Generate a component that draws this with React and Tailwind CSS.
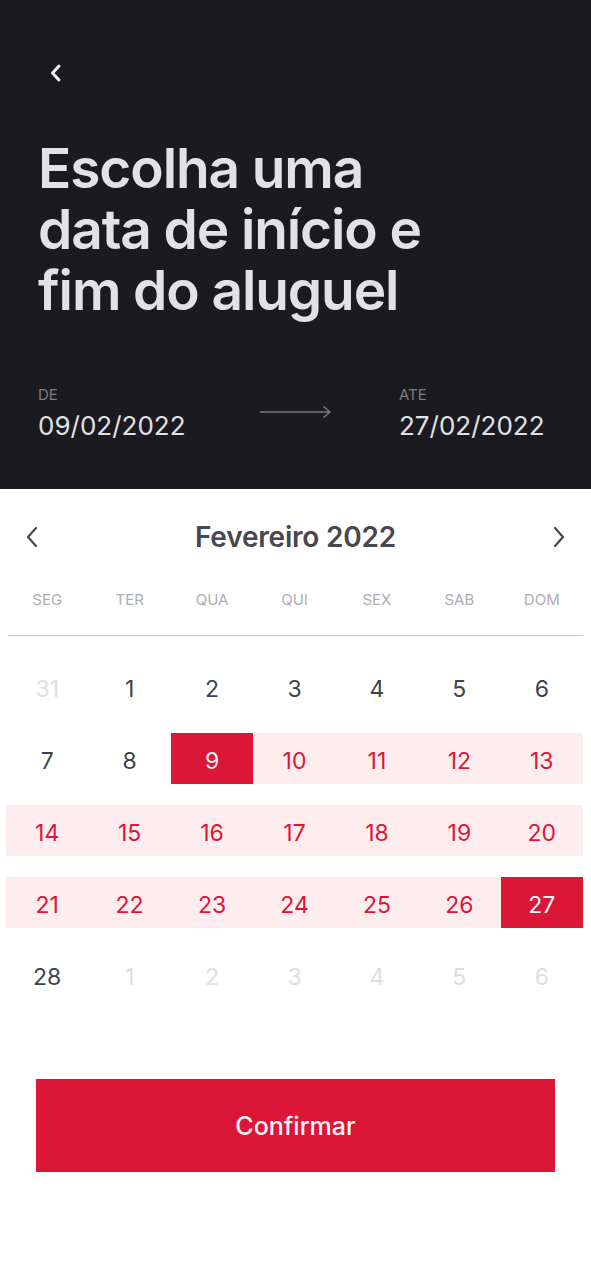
const weekDays = ["SEG", "TER", "QUA", "QUI", "SEX", "SAB", "DOM"];

// kind: off (other month), day (normal), start/end (selected), mid (in range)
const days = [
  { n: 31, kind: "off" }, { n: 1, kind: "day" }, { n: 2, kind: "day" }, { n: 3, kind: "day" }, { n: 4, kind: "day" }, { n: 5, kind: "day" }, { n: 6, kind: "day" },
  { n: 7, kind: "day" }, { n: 8, kind: "day" }, { n: 9, kind: "start" }, { n: 10, kind: "mid" }, { n: 11, kind: "mid" }, { n: 12, kind: "mid" }, { n: 13, kind: "mid" },
  { n: 14, kind: "mid" }, { n: 15, kind: "mid" }, { n: 16, kind: "mid" }, { n: 17, kind: "mid" }, { n: 18, kind: "mid" }, { n: 19, kind: "mid" }, { n: 20, kind: "mid" },
  { n: 21, kind: "mid" }, { n: 22, kind: "mid" }, { n: 23, kind: "mid" }, { n: 24, kind: "mid" }, { n: 25, kind: "mid" }, { n: 26, kind: "mid" }, { n: 27, kind: "end" },
  { n: 28, kind: "day" }, { n: 1, kind: "off" }, { n: 2, kind: "off" }, { n: 3, kind: "off" }, { n: 4, kind: "off" }, { n: 5, kind: "off" }, { n: 6, kind: "off" },
];

const cellStyles = {
  off: "text-[#dedee3]",
  day: "text-[#3d434a]",
  start: "bg-[#dc1637] text-[#f4f5f6]",
  end: "bg-[#dc1637] text-[#f4f5f6]",
  mid: "bg-[#fdedef] text-[#dc1637]",
};

function Chevron({ dir, className }) {
  return (
    <svg width="14" height="22" viewBox="0 0 14 22" fill="none" className={className}>
      {dir === "left" ? (
        <path d="M11 2L3 11l8 9" stroke="currentColor" strokeWidth="2.2" strokeLinecap="round" strokeLinejoin="round" />
      ) : (
        <path d="M3 2l8 9-8 9" stroke="currentColor" strokeWidth="2.2" strokeLinecap="round" strokeLinejoin="round" />
      )}
    </svg>
  );
}

export default function App() {
  return (
    <div className="w-[591px] h-[1280px] bg-white overflow-hidden" style={{ fontFamily: "Inter, 'Liberation Sans', sans-serif" }}>
      <div className="h-[489px] bg-[#1b1b1f] pl-[38px] flex flex-col">
        <div className="mt-[63px] ml-[11px] text-[#f4f5f6]">
          <svg width="14" height="20" viewBox="0 0 14 20" fill="none">
            <path d="M10 3L3.5 10 10 17" stroke="currentColor" strokeWidth="3" strokeLinecap="round" strokeLinejoin="round" />
          </svg>
        </div>
        <h1 className="mt-[55px] text-[55px] leading-[61px] font-semibold text-[#e1e1e6] tracking-[-1.1px]">
          Escolha uma<br />data de início e<br />fim do aluguel
        </h1>
        <div className="mt-[65px] flex items-start">
          <div className="w-[222px]">
            <div className="text-[15px] leading-[18px] text-[#7a7a80]">DE</div>
            <div className="mt-[6px] text-[26px] leading-[32px] text-[#e1e1e6]">09/02/2022</div>
          </div>
          <div className="w-[139px] pt-[20px]">
            <svg width="72" height="12" viewBox="0 0 72 12" fill="none" className="text-[#7a7a80]">
              <path d="M0 6h70M64 1l6 5-6 5" stroke="currentColor" strokeWidth="1.6" strokeLinecap="round" strokeLinejoin="round" />
            </svg>
          </div>
          <div>
            <div className="text-[15px] leading-[18px] text-[#7a7a80]">ATE</div>
            <div className="mt-[6px] text-[26px] leading-[32px] text-[#e1e1e6]">27/02/2022</div>
          </div>
        </div>
      </div>

      <div className="pt-[24px]">
        <div className="h-[48px] flex items-center justify-between px-[25px] text-[#47474d]">
          <Chevron dir="left" />
          <div className="text-[28px] font-semibold tracking-[-0.2px]">Fevereiro 2022</div>
          <Chevron dir="right" />
        </div>
        <div className="mt-[24px] ml-[6px] w-[577px] grid grid-cols-7 h-[30px] items-center">
          {weekDays.map((d) => (
            <div key={d} className="text-center text-[15px] text-[#aeaeb3]">{d}</div>
          ))}
        </div>
        <div className="mt-[20px] mx-[8px] h-px bg-[#c9c9cc]" />
        <div className="mt-[25px] ml-[6px] w-[577px] grid grid-cols-7 gap-y-[21px]">
          {days.map((d, i) => (
            <div key={i} className={`h-[51px] pt-[6px] flex items-center justify-center text-[23px] ${cellStyles[d.kind]}`}>
              {d.n}
            </div>
          ))}
        </div>
        <div className="mt-[79px] mx-[36px] h-[93px] bg-[#dc1637] flex items-center justify-center">
          <span className="pt-[3px] text-[25px] font-medium text-[#f4f5f6]">Confirmar</span>
        </div>
      </div>
    </div>
  );
}
